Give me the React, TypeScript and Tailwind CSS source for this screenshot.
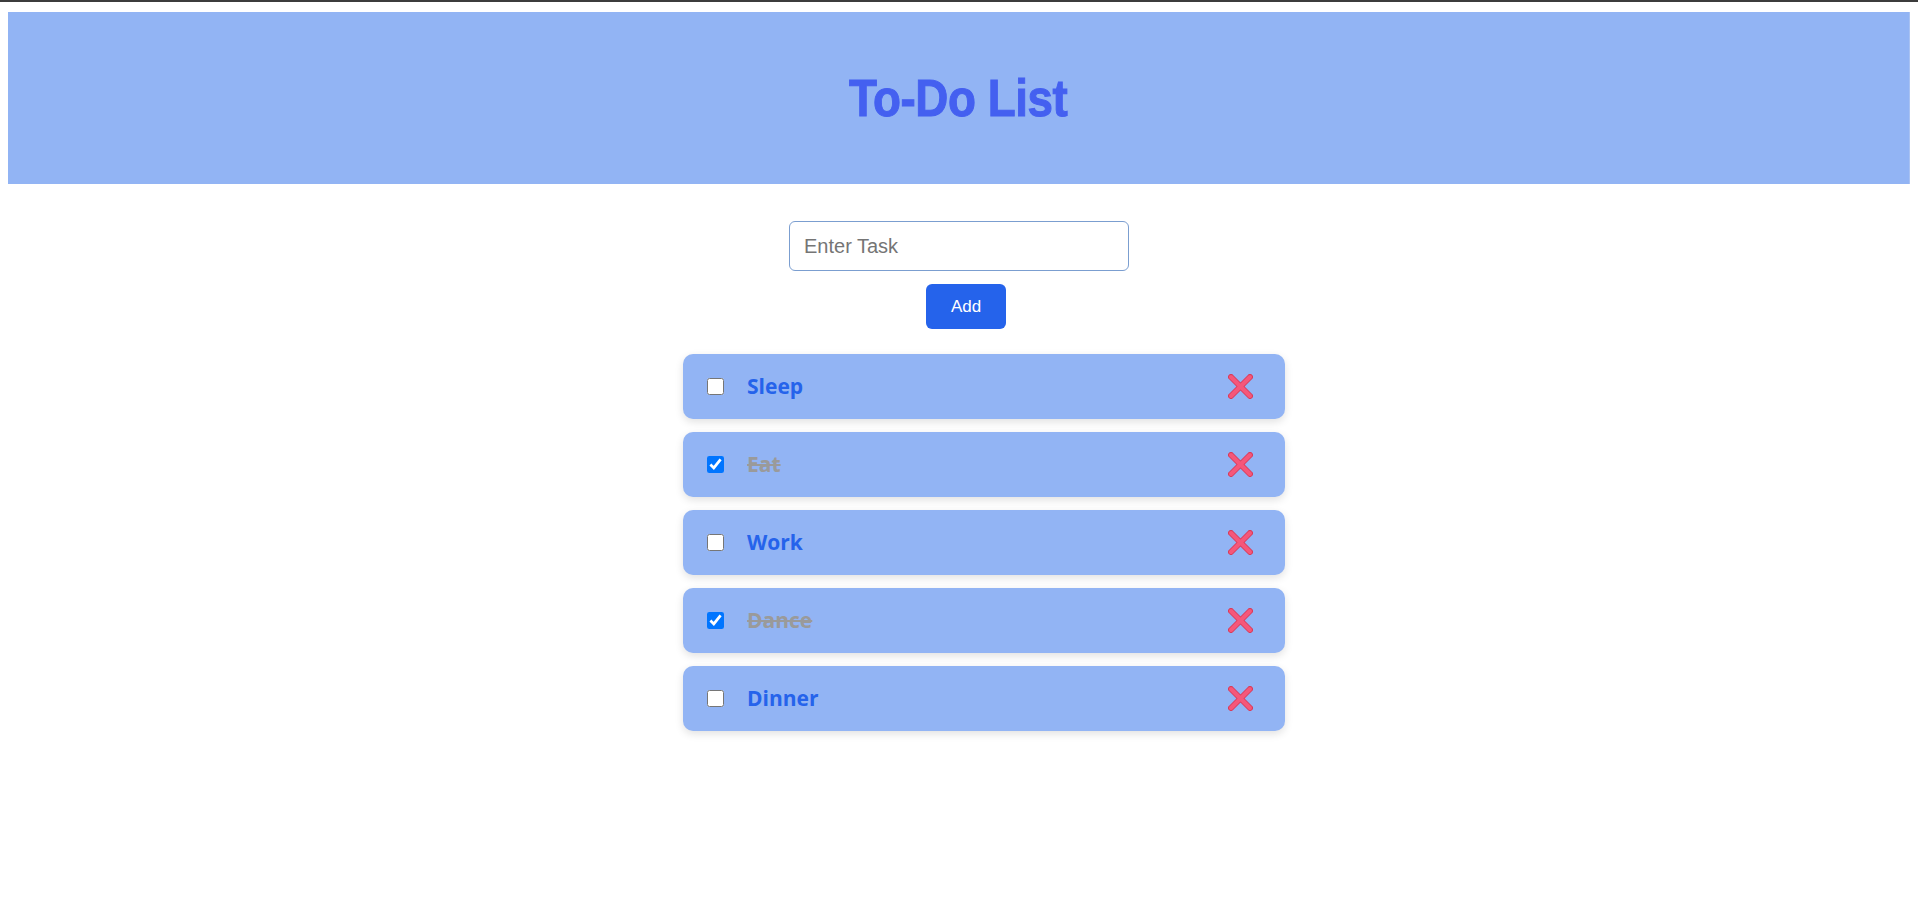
import React, { useState } from "react";

interface Task {
  id: number;
  text: string;
  done: boolean;
}

const initialTasks: Task[] = [
  { id: 1, text: "Sleep", done: false },
  { id: 2, text: "Eat", done: true },
  { id: 3, text: "Work", done: false },
  { id: 4, text: "Dance", done: true },
  { id: 5, text: "Dinner", done: false },
];

const CrossMark: React.FC = () => (
  <svg width="25" height="25" viewBox="0 0 25 25" aria-hidden="true">
    <g strokeLinecap="round">
      <line x1="3" y1="3" x2="22" y2="22" stroke="#d83c5c" strokeWidth="6" />
      <line x1="22" y1="3" x2="3" y2="22" stroke="#d83c5c" strokeWidth="6" />
      <line x1="3" y1="3" x2="22" y2="22" stroke="#f5577a" strokeWidth="4" />
      <line x1="22" y1="3" x2="3" y2="22" stroke="#f5577a" strokeWidth="4" />
    </g>
  </svg>
);

const TaskItem: React.FC<{
  task: Task;
  onToggle: (id: number) => void;
  onDelete: (id: number) => void;
}> = ({ task, onToggle, onDelete }) => {
  return (
    <li className="flex h-[65px] items-center rounded-[10px] bg-[#92b4f4] pl-[24px] pr-[32px] shadow-[0_3px_8px_rgba(0,0,0,0.12)]">
      <input
        type="checkbox"
        checked={task.done}
        onChange={() => onToggle(task.id)}
        className="m-0 h-[17px] w-[17px] accent-[#0075ff]"
      />
      <span
        className={`ml-[23px] flex-1 font-['Open_Sans',sans-serif] text-[21px] font-bold ${
          task.done ? "text-[#9a9a9a] line-through" : "text-[#2563eb]"
        }`}
      >
        {task.text}
      </span>
      <button
        type="button"
        onClick={() => onDelete(task.id)}
        className="flex h-[25px] w-[25px] items-center justify-center"
        title="Delete Task"
        aria-label={`Delete ${task.text}`}
      >
        <CrossMark />
      </button>
    </li>
  );
};

export default function App() {
  const [tasks, setTasks] = useState<Task[]>(initialTasks);
  const [value, setValue] = useState("");

  const addTask = () => {
    if (!value.trim()) return;
    setTasks([...tasks, { id: Date.now(), text: value.trim(), done: false }]);
    setValue("");
  };

  return (
    <div className="min-h-[912px] bg-white font-['Liberation_Sans',Arial,sans-serif]">
      <div className="h-[2px] bg-[#3c3c3c]" />
      <header className="mx-2 mt-[10px] flex h-[172px] items-center justify-center border-r border-[#a9c2f2] bg-[#92b4f4]">
        <h1 className="scale-x-[0.88] font-['Liberation_Sans',sans-serif] text-[52px] font-bold tracking-[-0.5px] text-[#4460f0] [-webkit-text-stroke:1px_#4460f0]">
          To-Do List
        </h1>
      </header>

      <div className="mt-[37px] flex flex-col items-center">
        <input
          type="text"
          value={value}
          onChange={(e) => setValue(e.target.value)}
          placeholder="Enter Task"
          className="h-[50px] w-[340px] rounded-[6px] border border-[#7b9ed0] bg-white px-[14px] text-[20px] text-[#222] outline-none placeholder:text-[#757575]"
        />
        <button
          type="button"
          onClick={addTask}
          className="ml-[14px] mt-[13px] h-[45px] w-[80px] rounded-[6px] bg-[#2563eb] text-[17px] text-white"
        >
          Add
        </button>
      </div>

      <div className="mt-[25px] flex justify-center">
        <ul className="flex w-[652px] flex-col gap-[13px] pl-[50px]">
          {tasks.map((task) => (
            <TaskItem
              key={task.id}
              task={task}
              onToggle={(id) =>
                setTasks(tasks.map((t) => (t.id === id ? { ...t, done: !t.done } : t)))
              }
              onDelete={(id) => setTasks(tasks.filter((t) => t.id !== id))}
            />
          ))}
        </ul>
      </div>
    </div>
  );
}
